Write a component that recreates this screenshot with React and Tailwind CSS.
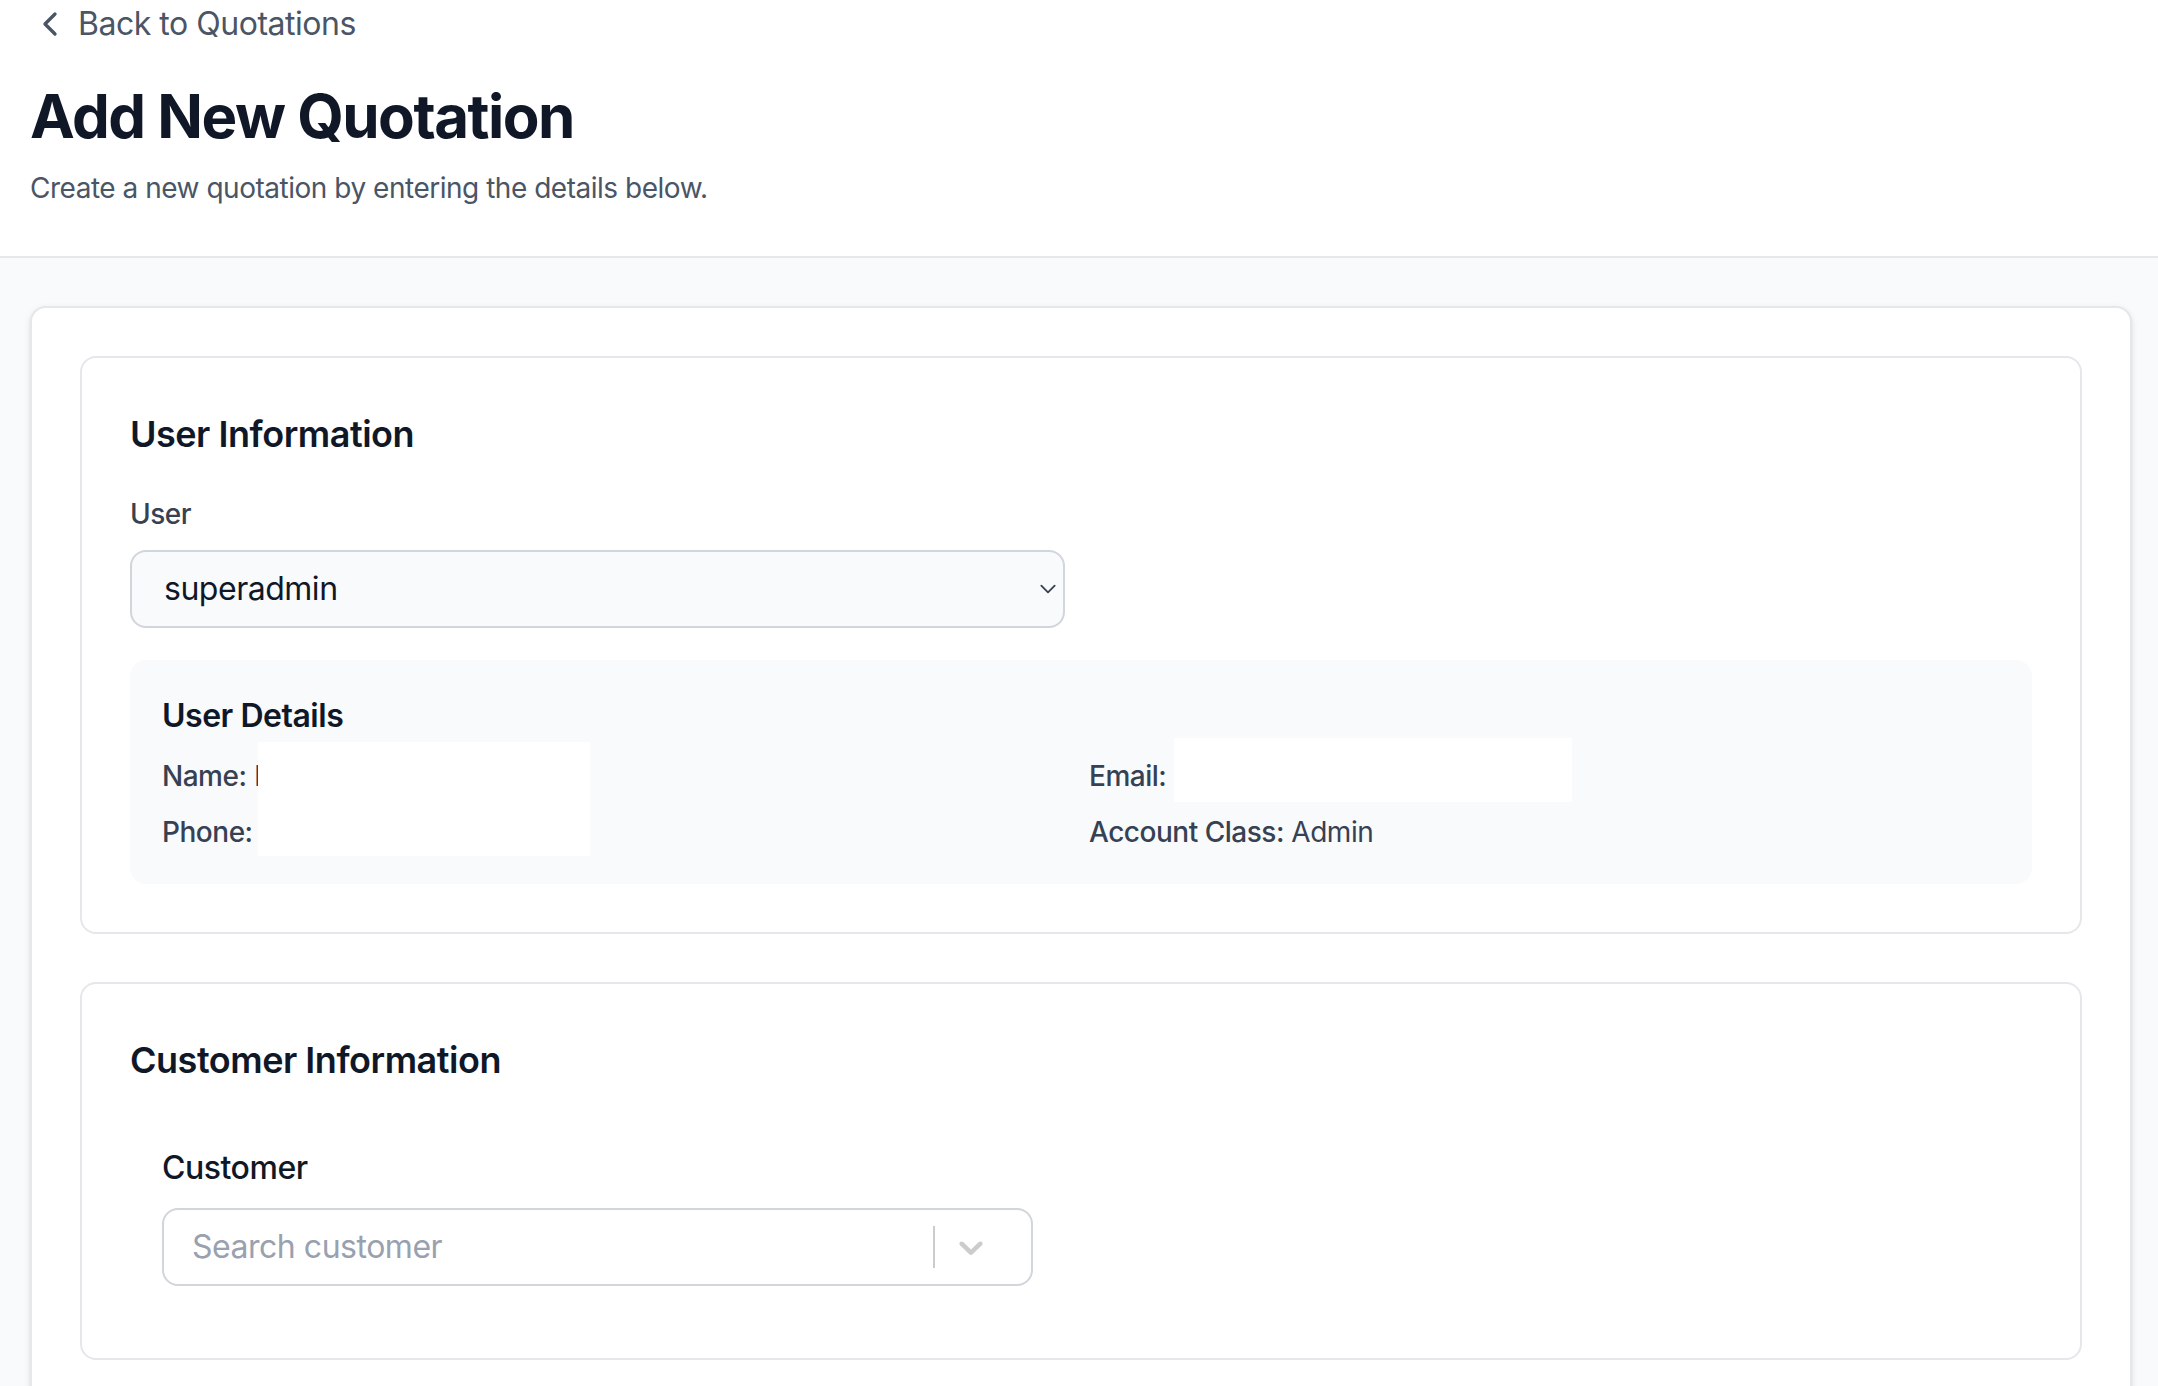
import React from "react";

function ChevronLeft() {
  return (
    <svg viewBox="0 0 24 24" className="w-5 h-5" fill="none" stroke="currentColor" strokeWidth="2" strokeLinecap="round" strokeLinejoin="round">
      <path d="m15 18-6-6 6-6" />
    </svg>
  );
}

function SelectArrow() {
  return (
    <svg viewBox="0 0 10 6" className="w-[9px] h-[5px]" fill="none" stroke="#374151" strokeWidth="1.1" strokeLinecap="round" strokeLinejoin="round">
      <path d="M1 1l4 4 4-4" />
    </svg>
  );
}

function ReactSelectChevron() {
  return (
    <svg viewBox="0 0 20 20" className="w-5 h-5" fill="#cccccc">
      <path d="M4.516 7.548c0.436-0.446 1.043-0.481 1.576 0l3.908 3.747 3.908-3.747c0.533-0.481 1.141-0.446 1.574 0 0.436 0.445 0.408 1.197 0 1.615-0.406 0.418-4.695 4.502-4.695 4.502-0.217 0.223-0.502 0.335-0.787 0.335s-0.57-0.112-0.789-0.335c0 0-4.287-4.084-4.695-4.502s-0.436-1.17 0-1.615z" />
    </svg>
  );
}

export default function App() {
  return (
    <div className="[zoom:2] font-['Inter',sans-serif] tracking-[-0.015em] bg-gray-50 min-h-[720px]">
      <header className="bg-white border-b border-gray-200 pl-[15px] pr-[13px] pb-6">
        <a className="flex items-center gap-1 text-base text-gray-600 leading-6">
          <ChevronLeft />
          <span>Back to Quotations</span>
        </a>
        <h1 className="mt-4 text-3xl leading-9 font-bold tracking-tight text-gray-900">Add New Quotation</h1>
        <p className="mt-2 text-sm text-gray-600">Create a new quotation by entering the details below.</p>
      </header>

      <main className="pl-[15px] pr-[13px] pt-6 pb-6">
        <div className="bg-white border border-gray-200 rounded-lg shadow-sm p-6 flex flex-col gap-6">
          <section className="border border-gray-200 rounded-lg p-6">
            <h2 className="text-lg leading-7 font-semibold text-gray-900 mb-4">User Information</h2>
            <div className="grid grid-cols-2 gap-4">
              <div>
                <label className="block text-sm font-medium text-gray-700 mb-2">User</label>
                <div className="h-[39px] flex items-center justify-between bg-gray-50 border border-gray-300 rounded-lg pl-4 pr-[3px] text-base text-gray-900">
                  <span>superadmin</span>
                  <SelectArrow />
                </div>
              </div>
            </div>

            <div className="relative mt-4 bg-gray-50 rounded-lg p-4">
              <h3 className="text-base font-semibold text-gray-900 mb-2">User Details</h3>
              <div className="grid grid-cols-2 gap-2 text-sm text-gray-700">
                <p><span className="font-medium">Name:</span> Ivan Tan</p>
                <p><span className="font-medium">Email:</span> superadmin@company.com</p>
                <p><span className="font-medium">Phone:</span> +65 9123 4567</p>
                <p><span className="font-medium">Account Class:</span> Admin</p>
              </div>
              <div className="absolute left-[64px] top-[41px] w-[166px] h-[57px] bg-white"></div>
              <div className="absolute left-[522px] top-[39px] w-[199px] h-[32px] bg-white"></div>
            </div>
          </section>

          <section className="border border-gray-200 rounded-lg p-6">
            <h2 className="text-lg leading-7 font-semibold text-gray-900 mb-4">Customer Information</h2>
            <div className="grid grid-cols-2 gap-x-12 px-4 py-3">
              <div>
                <label className="block text-base font-medium text-gray-900 mb-2">Customer</label>
                <div className="h-[39px] flex items-center bg-white border border-gray-300 rounded-lg pl-[14px] pr-[12px]">
                  <span className="flex-1 text-base text-gray-400">Search customer</span>
                  <span className="self-stretch my-2 w-px bg-[#cccccc]"></span>
                  <span className="p-2 flex items-center"><ReactSelectChevron /></span>
                </div>
              </div>
            </div>
          </section>
        </div>
      </main>
    </div>
  );
}
